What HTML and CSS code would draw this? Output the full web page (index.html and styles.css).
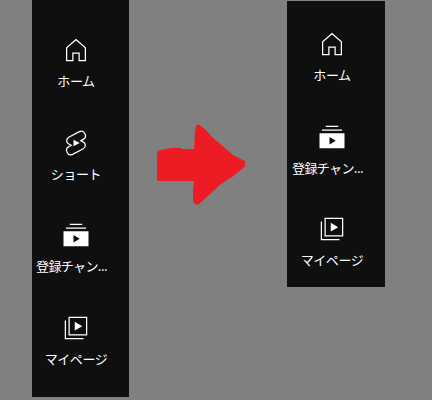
FILE: index.html
```html
<!DOCTYPE html>
<html lang="ja">
<head>
<meta charset="utf-8">
<title>ミニガイド</title>
<link rel="stylesheet" href="styles.css">
</head>
<body>
<svg class="symbols" aria-hidden="true">
  <symbol id="home" viewBox="0 0 24 24"><path d="M12 4.33l7 6.12V20h-4v-6H9v6H5v-9.55l7-6.12M12 3L4 10v11h6v-6h4v6h6V10l-8-7z"/></symbol>
  <symbol id="shorts" viewBox="0 0 24 24"><path d="M10 9.35v5.3L15 12z"/><path class="outline" d="M14.7 2.9L6.2 7.4C3.9 8.7 3.9 11.9 6.6 13.1L8.2 13.8L6.2 14.9C2.5 17 5.2 22.9 9.3 21.1L17.8 16.6C20.1 15.3 20.1 12.1 17.4 10.9L15.8 10.2L17.8 9.1C21.5 7 18.8 1.1 14.7 2.9Z"/></symbol>
  <symbol id="subs" viewBox="0 0 24 24"><path d="M20 7H4V6h16v1zm2 2v12H2V9h20zm-7 6l-5-3v6l5-3zm2-12H7v1h10V3z"/></symbol>
  <symbol id="mypage" viewBox="0 0 24 24"><path d="M11 7l6 3.5L11 14V7zm7 13H4V6H3v15h15v-1zm3-2H6V3h15v15zM7 17h13V4H7v13z"/></symbol>
</svg>
<main class="stage">
  <nav class="guide guide-before">
    <a class="item"><svg class="icon"><use href="#home"/></svg><span class="label">ホーム</span></a>
    <a class="item"><svg class="icon"><use href="#shorts"/></svg><span class="label">ショート</span></a>
    <a class="item"><svg class="icon"><use href="#subs"/></svg><span class="label label-long">登録チャン...</span></a>
    <a class="item"><svg class="icon"><use href="#mypage"/></svg><span class="label">マイページ</span></a>
  </nav>
  <svg class="arrow" viewBox="0 0 88 81"><path d="M0 31Q0 26 4 26Q13 23 24 24L25 25H37L38 7L39 2Q41-1 44 2L49 6L54 12L76 31L88 37V42L84 46L75 53L64 60L53 70L42 80Q38 82 36 77V67L37 57H1L0 56Z"/></svg>
  <nav class="guide guide-after">
    <a class="item"><svg class="icon"><use href="#home"/></svg><span class="label">ホーム</span></a>
    <a class="item"><svg class="icon"><use href="#subs"/></svg><span class="label label-long">登録チャン...</span></a>
    <a class="item"><svg class="icon"><use href="#mypage"/></svg><span class="label">マイページ</span></a>
  </nav>
</main>
</body>
</html>
```
FILE: styles.css
```css
body {
  margin: 0;
  background: #808080;
  overflow: hidden;
}
.symbols {
  display: none;
}
.stage {
  display: flex;
  align-items: flex-start;
  height: 400px;
  padding-left: 32px;
}
.guide {
  box-sizing: border-box;
  flex: none;
  background: #0f0f0f;
}
.guide-before {
  width: 97px;
  height: 397px;
  padding-top: 35px;
}
.guide-after {
  width: 98px;
  height: 286px;
  margin-top: 1px;
  margin-left: 42px;
  padding-top: 28px;
}
.item {
  display: flex;
  flex-direction: column;
  align-items: center;
  width: 88px;
  height: 92.6px;
  color: #fff;
}
.guide-after .item {
  width: 90px;
}
.icon {
  flex: none;
  width: 30px;
  height: 30px;
  fill: #fff;
}
.outline {
  fill: none;
  stroke: #fff;
  stroke-width: 1;
}
.label {
  margin-top: 6px;
  font: 13px/20px "Noto Sans CJK JP", sans-serif;
  letter-spacing: -0.4px;
  white-space: nowrap;
}
.label-long {
  align-self: flex-start;
  margin-left: 4px;
  letter-spacing: -0.6px;
}
.guide-after .label-long {
  margin-left: 5px;
}
.arrow {
  flex: none;
  width: 88px;
  height: 81px;
  margin-top: 124px;
  margin-left: 28px;
  fill: #ed1c24;
}
```
